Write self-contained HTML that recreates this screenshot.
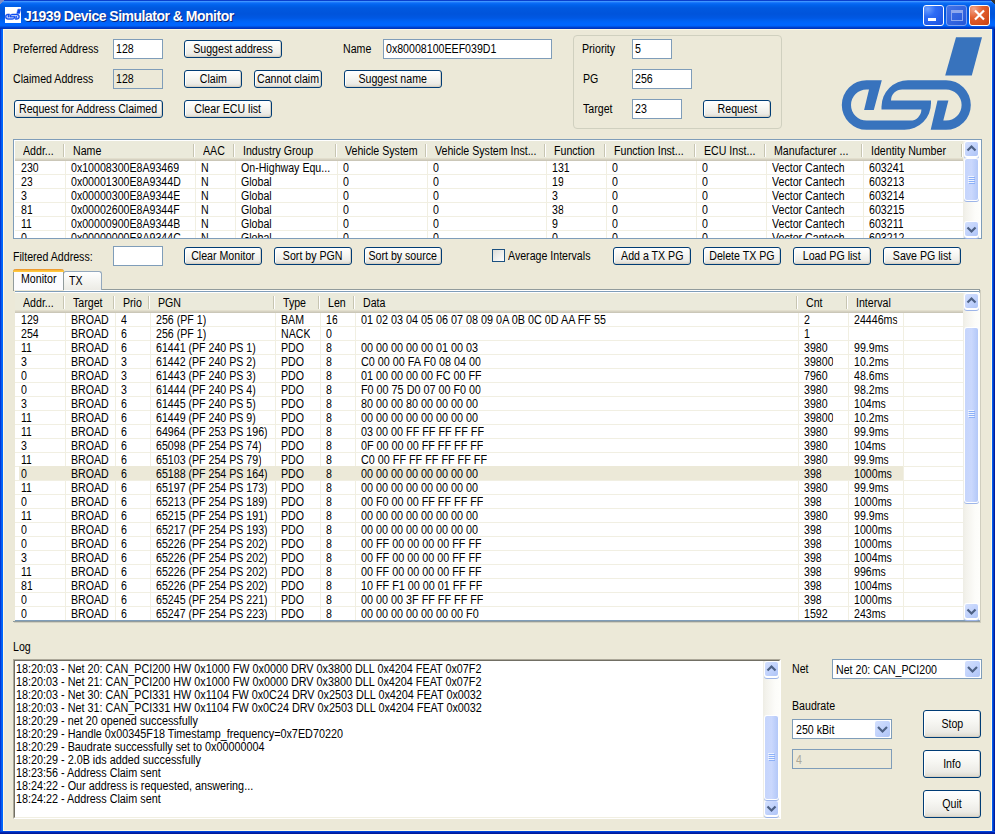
<!DOCTYPE html><html><head><meta charset="utf-8"><title>J1939 Device Simulator &amp; Monitor</title><style>
*{box-sizing:border-box;margin:0;padding:0}
html,body{width:995px;height:834px;overflow:hidden;background:#ECE9D8;font-family:"Liberation Sans",sans-serif;font-size:12px;color:#000;letter-spacing:0}
.lbl,.ht,.c{transform:scaleX(.885);transform-origin:0 0}
.sp{display:inline-block;transform:scaleX(.885)}
.tsp{display:inline-block;transform:scaleX(.885);transform-origin:0 0}
.a{position:absolute;white-space:pre}
.lbl{position:absolute;white-space:pre;line-height:13px}
.btn{position:absolute;display:flex;justify-content:center;border:1px solid #003C74;border-radius:3px;background:linear-gradient(#FFFFFF 0%,#F7F7F3 40%,#ECEBE6 80%,#DCD8CC 100%);text-align:center;white-space:pre;line-height:15px;box-shadow:inset -1px -1px 0 #D6D0C5, inset 1px 1px 0 #FFFFFF}
.tb{position:absolute;border:1px solid #7F9DB9;background:#fff;white-space:pre;padding-left:2px;line-height:17px}
.tbd{position:absolute;border:1px solid #7F9DB9;background:#ECE9D8;white-space:pre;padding-left:2px;line-height:17px}
.hdr{position:absolute;background:linear-gradient(#EBEADB 0,#EBEADB 17px,#E2DECD 17px,#E2DECD 18px,#D6D2C2 18px,#D6D2C2 19px,#CBC7B8 19px)}
.hs{position:absolute;top:3px;width:2px;height:13px;border-left:1px solid #C7C5B2;border-right:1px solid #FFFFFF}
.ht{position:absolute;top:3px;line-height:13px;white-space:pre}
.gv{position:absolute;width:1px;background:#F1EFE2}
.gh{position:absolute;height:1px;background:#F1EFE2}
.c{position:absolute;white-space:pre;line-height:13px;overflow:hidden}
</style></head><body>
<div class="a" style="left:0;top:0;width:995px;height:29px;background:linear-gradient(#0A3FCC 0px,#0A3FCC 1px,#3D95FF 1px,#3D95FF 2px,#2A82FF 2px,#0C6DF7 3px,#0062EC 5px,#0058DF 8px,#0054DB 14px,#0058E3 18px,#0062F4 21px,#0066FF 24px,#0063FA 26px,#0047D5 27px,#0031B8 29px)"></div>
<div class="a" style="left:0;top:0;width:4px;height:4px;background:linear-gradient(135deg,#7D8CC8 50%,transparent 50%)"></div>
<div class="a" style="left:991px;top:0;width:4px;height:4px;background:linear-gradient(225deg,#333 50%,transparent 50%)"></div>
<div class="a" style="left:0;top:29px;width:3px;height:805px;background:linear-gradient(90deg,#0019CF,#0855DD 1px,#0066FF 2px)"></div>
<div class="a" style="left:992px;top:29px;width:3px;height:805px;background:linear-gradient(90deg,#0066FF,#0855DD 1px,#001EA0 2px)"></div>
<div class="a" style="left:0;top:831px;width:995px;height:3px;background:linear-gradient(#0055EA,#0033CC 1px,#001A9A 2px)"></div>
<div class="a" style="left:3px;top:29px;width:989px;height:1px;background:#FFF8E2"></div>
<div class="a" style="left:3px;top:29px;width:1px;height:802px;background:#FFF8E2"></div>
<div class="a" style="left:991px;top:29px;width:1px;height:802px;background:#FFF8E2"></div>
<div class="a" style="left:3px;top:830px;width:989px;height:1px;background:#FFF8E2"></div>
<svg class="a" style="left:5px;top:7px" width="16" height="16" viewBox="0 0 16 16"><rect width="16" height="16" fill="#fff"/>
<g transform="translate(-93.2 -2.0) scale(0.111)"><path fill="#0D4AF0" stroke="#0D4AF0" stroke-width="4" d="M956 37.2 L982 37.2 L971.8 75.5 L945.2 75.5Z"/><path fill="#0D4AF0" stroke="#0D4AF0" stroke-width="4" d="M881.8 80.2 L866.6 80.2 A24.8 24.8 0 0 0 866.6 129.8 L904.5 129.8 A26.5 26.5 0 0 0 931 103.3 L931 100.5 L891 100.5 A11.2 11.2 0 0 1 902.3 89.4 L946 89.4 A15.6 15.6 0 0 1 946 120.6 L943.3 120.6 L948.4 100.5 L937.5 100.5 L930.7 129.8 L946 129.8 A24.8 24.8 0 0 0 946 80.2 L908 80.2 A26.5 26.5 0 0 0 881.5 106.7 L881.5 109.6 L921.4 109.6 A11.2 11.2 0 0 1 910.2 120.6 L866.6 120.6 A15.6 15.6 0 0 1 866.6 89.4 L869 89.4 L864.1 110 L873.8 110 Z"/></g></svg>
<div class="a" style="left:25px;top:9px;font:bold 14px 'Liberation Sans', sans-serif;letter-spacing:-0.5px;color:#0A1E6E;opacity:.9">J1939 Device Simulator &amp; Monitor</div>
<div class="a" style="left:24px;top:8px;font:bold 14px 'Liberation Sans', sans-serif;letter-spacing:-0.5px;color:#FFFFFF">J1939 Device Simulator &amp; Monitor</div>
<div class="a" style="left:923px;top:5px;width:21px;height:21px;border:1px solid #fff;border-radius:3px;background:radial-gradient(circle at 20% 15%,#6EA0FF 0,#2E6CF5 35%,#1A50E0 100%)"><div class="a" style="left:4px;top:12px;width:8px;height:3px;background:#fff"></div></div>
<div class="a" style="left:946px;top:5px;width:21px;height:21px;border:1px solid #7FA2F2;border-radius:3px;background:linear-gradient(135deg,#4474E8,#2456D8)"><div class="a" style="left:4px;top:4px;width:12px;height:11px;border:1px solid #8EA8EE;border-top:3px solid #8EA8EE"></div></div>
<div class="a" style="left:969px;top:5px;width:21px;height:21px;border:1px solid #fff;border-radius:3px;background:radial-gradient(circle at 20% 15%,#F2A48A 0,#E3602F 40%,#C8400F 100%)"><svg class="a" style="left:0;top:0" width="19" height="19"><path d="M5 4.5 L14 13.5 M14 4.5 L5 13.5" stroke="#fff" stroke-width="2.2"/></svg></div>
<div class="lbl" style="left:13px;top:43px;">Preferred Address</div>
<div class="tb" style="left:113px;top:39px;width:50px;height:20px;line-height:18px;"><span class="tsp">128</span></div>
<div class="lbl" style="left:13px;top:73px;">Claimed Address</div>
<div class="tbd" style="left:113px;top:69px;width:50px;height:20px;line-height:18px;"><span class="tsp">128</span></div>
<div class="btn" style="left:14px;top:100px;width:149px;height:18px;line-height:16px;"><span class="sp">Request for Address Claimed</span></div>
<div class="btn" style="left:184px;top:40px;width:98px;height:18px;line-height:16px;"><span class="sp">Suggest address</span></div>
<div class="btn" style="left:184px;top:70px;width:58px;height:18px;line-height:16px;"><span class="sp">Claim</span></div>
<div class="btn" style="left:254px;top:70px;width:68px;height:18px;line-height:16px;"><span class="sp">Cannot claim</span></div>
<div class="btn" style="left:184px;top:100px;width:88px;height:18px;line-height:16px;"><span class="sp">Clear ECU list</span></div>
<div class="lbl" style="left:343px;top:43px;">Name</div>
<div class="tb" style="left:383px;top:39px;width:169px;height:20px;line-height:18px;"><span class="tsp">0x80008100EEF039D1</span></div>
<div class="btn" style="left:344px;top:70px;width:98px;height:18px;line-height:16px;"><span class="sp">Suggest name</span></div>
<div class="a" style="left:573px;top:35px;width:209px;height:94px;border:1px solid #D0D0BF;border-radius:4px"></div>
<div class="lbl" style="left:582px;top:43px;">Priority</div>
<div class="tb" style="left:632px;top:39px;width:40px;height:20px;line-height:18px;"><span class="tsp">5</span></div>
<div class="lbl" style="left:583px;top:73px;">PG</div>
<div class="tb" style="left:632px;top:69px;width:60px;height:20px;line-height:18px;"><span class="tsp">256</span></div>
<div class="lbl" style="left:583px;top:103px;">Target</div>
<div class="tb" style="left:632px;top:99px;width:50px;height:20px;line-height:18px;"><span class="tsp">23</span></div>
<div class="btn" style="left:703px;top:100px;width:68px;height:18px;line-height:16px;"><span class="sp">Request</span></div>
<svg class="a" style="left:0;top:0" width="995" height="140" viewBox="0 0 995 140">
<path fill="#3873BD" d="M956 37.2 L982 37.2 L971.8 75.5 L945.2 75.5Z"/>
<path fill="#3873BD" fill-rule="nonzero" d="M881.8 80.2 L866.6 80.2 A24.8 24.8 0 0 0 866.6 129.8 L904.5 129.8 A26.5 26.5 0 0 0 931 103.3 L931 100.5 L891 100.5 A11.2 11.2 0 0 1 902.3 89.4 L946 89.4 A15.6 15.6 0 0 1 946 120.6 L943.3 120.6 L948.4 100.5 L937.5 100.5 L930.7 129.8 L946 129.8 A24.8 24.8 0 0 0 946 80.2 L908 80.2 A26.5 26.5 0 0 0 881.5 106.7 L881.5 109.6 L921.4 109.6 A11.2 11.2 0 0 1 910.2 120.6 L866.6 120.6 A15.6 15.6 0 0 1 866.6 89.4 L869 89.4 L864.1 110 L873.8 110 Z"/>
</svg>
<div class="a" style="left:13px;top:139px;width:969px;height:100px;border:1px solid #7F9DB9;background:#fff"></div>
<div class="gh" style="left:15px;top:174px;width:948px"></div>
<div class="gh" style="left:15px;top:188px;width:948px"></div>
<div class="gh" style="left:15px;top:202px;width:948px"></div>
<div class="gh" style="left:15px;top:216px;width:948px"></div>
<div class="gh" style="left:15px;top:230px;width:948px"></div>
<div class="gv" style="left:65px;top:161px;height:77px"></div>
<div class="gv" style="left:195px;top:161px;height:77px"></div>
<div class="gv" style="left:235px;top:161px;height:77px"></div>
<div class="gv" style="left:337px;top:161px;height:77px"></div>
<div class="gv" style="left:427px;top:161px;height:77px"></div>
<div class="gv" style="left:546px;top:161px;height:77px"></div>
<div class="gv" style="left:606px;top:161px;height:77px"></div>
<div class="gv" style="left:696px;top:161px;height:77px"></div>
<div class="gv" style="left:766px;top:161px;height:77px"></div>
<div class="gv" style="left:863px;top:161px;height:77px"></div>
<div class="a" style="left:15px;top:161px;width:948px;height:77px;overflow:hidden">
<div class="c" style="left:6px;top:1px">230</div>
<div class="c" style="left:56px;top:1px">0x10008300E8A93469</div>
<div class="c" style="left:186px;top:1px">N</div>
<div class="c" style="left:226px;top:1px">On-Highway Equ...</div>
<div class="c" style="left:328px;top:1px">0</div>
<div class="c" style="left:418px;top:1px">0</div>
<div class="c" style="left:537px;top:1px">131</div>
<div class="c" style="left:597px;top:1px">0</div>
<div class="c" style="left:687px;top:1px">0</div>
<div class="c" style="left:757px;top:1px">Vector Cantech</div>
<div class="c" style="left:854px;top:1px">603241</div>
<div class="c" style="left:6px;top:15px">23</div>
<div class="c" style="left:56px;top:15px">0x00001300E8A9344D</div>
<div class="c" style="left:186px;top:15px">N</div>
<div class="c" style="left:226px;top:15px">Global</div>
<div class="c" style="left:328px;top:15px">0</div>
<div class="c" style="left:418px;top:15px">0</div>
<div class="c" style="left:537px;top:15px">19</div>
<div class="c" style="left:597px;top:15px">0</div>
<div class="c" style="left:687px;top:15px">0</div>
<div class="c" style="left:757px;top:15px">Vector Cantech</div>
<div class="c" style="left:854px;top:15px">603213</div>
<div class="c" style="left:6px;top:29px">3</div>
<div class="c" style="left:56px;top:29px">0x00000300E8A9344E</div>
<div class="c" style="left:186px;top:29px">N</div>
<div class="c" style="left:226px;top:29px">Global</div>
<div class="c" style="left:328px;top:29px">0</div>
<div class="c" style="left:418px;top:29px">0</div>
<div class="c" style="left:537px;top:29px">3</div>
<div class="c" style="left:597px;top:29px">0</div>
<div class="c" style="left:687px;top:29px">0</div>
<div class="c" style="left:757px;top:29px">Vector Cantech</div>
<div class="c" style="left:854px;top:29px">603214</div>
<div class="c" style="left:6px;top:43px">81</div>
<div class="c" style="left:56px;top:43px">0x00002600E8A9344F</div>
<div class="c" style="left:186px;top:43px">N</div>
<div class="c" style="left:226px;top:43px">Global</div>
<div class="c" style="left:328px;top:43px">0</div>
<div class="c" style="left:418px;top:43px">0</div>
<div class="c" style="left:537px;top:43px">38</div>
<div class="c" style="left:597px;top:43px">0</div>
<div class="c" style="left:687px;top:43px">0</div>
<div class="c" style="left:757px;top:43px">Vector Cantech</div>
<div class="c" style="left:854px;top:43px">603215</div>
<div class="c" style="left:6px;top:57px">11</div>
<div class="c" style="left:56px;top:57px">0x00000900E8A9344B</div>
<div class="c" style="left:186px;top:57px">N</div>
<div class="c" style="left:226px;top:57px">Global</div>
<div class="c" style="left:328px;top:57px">0</div>
<div class="c" style="left:418px;top:57px">0</div>
<div class="c" style="left:537px;top:57px">9</div>
<div class="c" style="left:597px;top:57px">0</div>
<div class="c" style="left:687px;top:57px">0</div>
<div class="c" style="left:757px;top:57px">Vector Cantech</div>
<div class="c" style="left:854px;top:57px">603211</div>
<div class="c" style="left:6px;top:71px">0</div>
<div class="c" style="left:56px;top:71px">0x00000000E8A9344C</div>
<div class="c" style="left:186px;top:71px">N</div>
<div class="c" style="left:226px;top:71px">Global</div>
<div class="c" style="left:328px;top:71px">0</div>
<div class="c" style="left:418px;top:71px">0</div>
<div class="c" style="left:537px;top:71px">0</div>
<div class="c" style="left:597px;top:71px">0</div>
<div class="c" style="left:687px;top:71px">0</div>
<div class="c" style="left:757px;top:71px">Vector Cantech</div>
<div class="c" style="left:854px;top:71px">603212</div>
</div>
<div class="hdr" style="left:15px;top:141px;width:948px;height:20px"></div>
<div class="hs" style="left:63px;top:144px"></div>
<div class="hs" style="left:193px;top:144px"></div>
<div class="hs" style="left:233px;top:144px"></div>
<div class="hs" style="left:335px;top:144px"></div>
<div class="hs" style="left:425px;top:144px"></div>
<div class="hs" style="left:544px;top:144px"></div>
<div class="hs" style="left:604px;top:144px"></div>
<div class="hs" style="left:694px;top:144px"></div>
<div class="hs" style="left:764px;top:144px"></div>
<div class="hs" style="left:861px;top:144px"></div>
<div class="hs" style="left:961px;top:144px"></div>
<div class="ht" style="left:23px;top:145px">Addr...</div>
<div class="ht" style="left:73px;top:145px">Name</div>
<div class="ht" style="left:203px;top:145px">AAC</div>
<div class="ht" style="left:243px;top:145px">Industry Group</div>
<div class="ht" style="left:345px;top:145px">Vehicle System</div>
<div class="ht" style="left:435px;top:145px">Vehicle System Inst...</div>
<div class="ht" style="left:554px;top:145px">Function</div>
<div class="ht" style="left:614px;top:145px">Function Inst...</div>
<div class="ht" style="left:704px;top:145px">ECU Inst...</div>
<div class="ht" style="left:774px;top:145px">Manufacturer ...</div>
<div class="ht" style="left:871px;top:145px">Identity Number</div>
<div class="a" style="left:963px;top:141px;width:17px;height:97px;background:linear-gradient(90deg,#EEEDE5 0,#F3F2EC 3px,#FCFCF9 12px,#FEFEFB 17px)"></div>
<div class="a" style="left:964px;top:141px;width:15px;height:17px;border-radius:3px;background:#fff;box-shadow:0 1px 0 #9DB5E8"></div>
<div class="a" style="left:965px;top:142px;width:13px;height:14px;border-radius:2px;background:linear-gradient(135deg,#D4E0FD 0%,#C2D3FC 50%,#AEC4F6 100%)"><svg class="a" style="left:-1px;top:0" width="15" height="14"><path d="M3.5 8.5 L7.5 4.5 L11.5 8.5" fill="none" stroke="#4D6185" stroke-width="2.2"/></svg></div>
<div class="a" style="left:964px;top:221px;width:15px;height:17px;border-radius:3px;background:#fff;box-shadow:0 1px 0 #9DB5E8"></div>
<div class="a" style="left:965px;top:222px;width:13px;height:14px;border-radius:2px;background:linear-gradient(135deg,#D4E0FD 0%,#C2D3FC 50%,#AEC4F6 100%)"><svg class="a" style="left:-1px;top:0" width="15" height="14"><path d="M3.5 5.5 L7.5 9.5 L11.5 5.5" fill="none" stroke="#4D6185" stroke-width="2.2"/></svg></div>
<div class="a" style="left:964px;top:158px;width:15px;height:43px;border-radius:3px;background:#fff;box-shadow:0 1px 0 #9DB5E8"></div>
<div class="a" style="left:965px;top:159px;width:13px;height:41px;border-radius:2px;background:linear-gradient(90deg,#C6D5FC 0%,#CAD8FD 50%,#B3C8F8 100%)"></div>
<div class="a" style="left:968px;top:176px;width:6px;height:1px;background:#EEF3FE"></div>
<div class="a" style="left:969px;top:177px;width:6px;height:1px;background:#8CB0F8"></div>
<div class="a" style="left:968px;top:178px;width:6px;height:1px;background:#EEF3FE"></div>
<div class="a" style="left:969px;top:179px;width:6px;height:1px;background:#8CB0F8"></div>
<div class="a" style="left:968px;top:180px;width:6px;height:1px;background:#EEF3FE"></div>
<div class="a" style="left:969px;top:181px;width:6px;height:1px;background:#8CB0F8"></div>
<div class="a" style="left:968px;top:182px;width:6px;height:1px;background:#EEF3FE"></div>
<div class="a" style="left:969px;top:183px;width:6px;height:1px;background:#8CB0F8"></div>
<div class="lbl" style="left:13px;top:251px;">Filtered Address:</div>
<div class="tb" style="left:113px;top:246px;width:50px;height:20px;line-height:18px;"><span class="tsp"></span></div>
<div class="btn" style="left:184px;top:247px;width:78px;height:18px;line-height:16px;"><span class="sp">Clear Monitor</span></div>
<div class="btn" style="left:274px;top:247px;width:78px;height:18px;line-height:16px;"><span class="sp">Sort by PGN</span></div>
<div class="btn" style="left:364px;top:247px;width:78px;height:18px;line-height:16px;"><span class="sp">Sort by source</span></div>
<div class="a" style="left:492px;top:249px;width:13px;height:13px;border:1px solid #1C5180;background:linear-gradient(135deg,#DCDCD7,#FFFFFF)"></div>
<div class="lbl" style="left:508px;top:250px;">Average Intervals</div>
<div class="btn" style="left:613px;top:247px;width:78px;height:18px;line-height:16px;"><span class="sp">Add a TX PG</span></div>
<div class="btn" style="left:703px;top:247px;width:78px;height:18px;line-height:16px;"><span class="sp">Delete TX PG</span></div>
<div class="btn" style="left:793px;top:247px;width:78px;height:18px;line-height:16px;"><span class="sp">Load PG list</span></div>
<div class="btn" style="left:883px;top:247px;width:78px;height:18px;line-height:16px;"><span class="sp">Save PG list</span></div>
<div class="a" style="left:13px;top:289px;width:967px;height:333px;border:1px solid #919B9C;border-left:none;box-shadow:1px 1px 0 #D0CEBF"></div>
<div class="a" style="left:63px;top:271px;width:39px;height:19px;border:1px solid #93A8BD;border-bottom:none;border-radius:3px 3px 0 0;background:linear-gradient(#FFFFFF,#F3F3EF 60%,#ECEBE5)"></div>
<div class="lbl" style="left:69px;top:275px;">TX</div>
<div class="a" style="left:13px;top:269px;width:51px;height:22px;border:1px solid #919B9C;border-bottom:none;border-radius:3px 3px 0 0;background:#FCFCFE;border-top:none"></div>
<div class="a" style="left:13px;top:269px;width:51px;height:3px;border-radius:3px 3px 0 0;background:linear-gradient(#E68B2C,#FFC73C 2px,#FFC73C)"></div>
<div class="lbl" style="left:21px;top:273px;">Monitor</div>
<div class="a" style="left:14px;top:290px;width:965px;height:330px;background:#ECE9D8"></div>
<div class="a" style="left:64px;top:290px;width:915px;height:1px;background:#FFFFFF"></div>
<div class="a" style="left:15px;top:291px;width:965px;height:330px;border-top:1px solid #7F9DB9;border-right:1px solid #A5B9DA;border-bottom:1px solid #7F9DB9;background:#fff"></div>
<div class="gh" style="left:15px;top:326px;width:948px"></div>
<div class="gh" style="left:15px;top:340px;width:948px"></div>
<div class="gh" style="left:15px;top:354px;width:948px"></div>
<div class="gh" style="left:15px;top:368px;width:948px"></div>
<div class="gh" style="left:15px;top:382px;width:948px"></div>
<div class="gh" style="left:15px;top:396px;width:948px"></div>
<div class="gh" style="left:15px;top:410px;width:948px"></div>
<div class="gh" style="left:15px;top:424px;width:948px"></div>
<div class="gh" style="left:15px;top:438px;width:948px"></div>
<div class="gh" style="left:15px;top:452px;width:948px"></div>
<div class="gh" style="left:15px;top:466px;width:4px"></div>
<div class="gh" style="left:903px;top:466px;width:60px"></div>
<div class="gh" style="left:15px;top:480px;width:948px"></div>
<div class="gh" style="left:15px;top:494px;width:948px"></div>
<div class="gh" style="left:15px;top:508px;width:948px"></div>
<div class="gh" style="left:15px;top:522px;width:948px"></div>
<div class="gh" style="left:15px;top:536px;width:948px"></div>
<div class="gh" style="left:15px;top:550px;width:948px"></div>
<div class="gh" style="left:15px;top:564px;width:948px"></div>
<div class="gh" style="left:15px;top:578px;width:948px"></div>
<div class="gh" style="left:15px;top:592px;width:948px"></div>
<div class="gh" style="left:15px;top:606px;width:948px"></div>
<div class="gv" style="left:65px;top:313px;height:307px"></div>
<div class="gv" style="left:115px;top:313px;height:307px"></div>
<div class="gv" style="left:150px;top:313px;height:307px"></div>
<div class="gv" style="left:275px;top:313px;height:307px"></div>
<div class="gv" style="left:320px;top:313px;height:307px"></div>
<div class="gv" style="left:355px;top:313px;height:307px"></div>
<div class="gv" style="left:798px;top:313px;height:307px"></div>
<div class="gv" style="left:848px;top:313px;height:307px"></div>
<div class="gv" style="left:903px;top:313px;height:307px"></div>
<div class="a" style="left:19px;top:466px;width:884px;height:14px;background:#ECE9D8"></div>
<div class="a" style="left:15px;top:313px;width:948px;height:307px;overflow:hidden">
<div class="c" style="left:6px;top:1px">129</div>
<div class="c" style="left:56px;top:1px">BROAD</div>
<div class="c" style="left:106px;top:1px">4</div>
<div class="c" style="left:141px;top:1px">256 (PF 1)</div>
<div class="c" style="left:266px;top:1px">BAM</div>
<div class="c" style="left:311px;top:1px">16</div>
<div class="c" style="left:346px;top:1px;transform:scaleX(.9)">01 02 03 04 05 06 07 08 09 0A 0B 0C 0D AA FF 55</div>
<div class="c" style="left:789px;top:1px">2</div>
<div class="c" style="left:839px;top:1px">24446ms</div>
<div class="c" style="left:6px;top:15px">254</div>
<div class="c" style="left:56px;top:15px">BROAD</div>
<div class="c" style="left:106px;top:15px">6</div>
<div class="c" style="left:141px;top:15px">256 (PF 1)</div>
<div class="c" style="left:266px;top:15px">NACK</div>
<div class="c" style="left:311px;top:15px">0</div>
<div class="c" style="left:789px;top:15px">1</div>
<div class="c" style="left:6px;top:29px">11</div>
<div class="c" style="left:56px;top:29px">BROAD</div>
<div class="c" style="left:106px;top:29px">6</div>
<div class="c" style="left:141px;top:29px">61441 (PF 240 PS 1)</div>
<div class="c" style="left:266px;top:29px">PDO</div>
<div class="c" style="left:311px;top:29px">8</div>
<div class="c" style="left:346px;top:29px;transform:scaleX(.9)">00 00 00 00 00 01 00 03</div>
<div class="c" style="left:789px;top:29px">3980</div>
<div class="c" style="left:839px;top:29px">99.9ms</div>
<div class="c" style="left:6px;top:43px">3</div>
<div class="c" style="left:56px;top:43px">BROAD</div>
<div class="c" style="left:106px;top:43px">3</div>
<div class="c" style="left:141px;top:43px">61442 (PF 240 PS 2)</div>
<div class="c" style="left:266px;top:43px">PDO</div>
<div class="c" style="left:311px;top:43px">8</div>
<div class="c" style="left:346px;top:43px;transform:scaleX(.9)">C0 00 00 FA F0 08 04 00</div>
<div class="c" style="left:789px;top:43px">39800</div>
<div class="c" style="left:839px;top:43px">10.2ms</div>
<div class="c" style="left:6px;top:57px">0</div>
<div class="c" style="left:56px;top:57px">BROAD</div>
<div class="c" style="left:106px;top:57px">3</div>
<div class="c" style="left:141px;top:57px">61443 (PF 240 PS 3)</div>
<div class="c" style="left:266px;top:57px">PDO</div>
<div class="c" style="left:311px;top:57px">8</div>
<div class="c" style="left:346px;top:57px;transform:scaleX(.9)">01 00 00 00 00 FC 00 FF</div>
<div class="c" style="left:789px;top:57px">7960</div>
<div class="c" style="left:839px;top:57px">48.6ms</div>
<div class="c" style="left:6px;top:71px">0</div>
<div class="c" style="left:56px;top:71px">BROAD</div>
<div class="c" style="left:106px;top:71px">3</div>
<div class="c" style="left:141px;top:71px">61444 (PF 240 PS 4)</div>
<div class="c" style="left:266px;top:71px">PDO</div>
<div class="c" style="left:311px;top:71px">8</div>
<div class="c" style="left:346px;top:71px;transform:scaleX(.9)">F0 00 75 D0 07 00 F0 00</div>
<div class="c" style="left:789px;top:71px">3980</div>
<div class="c" style="left:839px;top:71px">98.2ms</div>
<div class="c" style="left:6px;top:85px">3</div>
<div class="c" style="left:56px;top:85px">BROAD</div>
<div class="c" style="left:106px;top:85px">6</div>
<div class="c" style="left:141px;top:85px">61445 (PF 240 PS 5)</div>
<div class="c" style="left:266px;top:85px">PDO</div>
<div class="c" style="left:311px;top:85px">8</div>
<div class="c" style="left:346px;top:85px;transform:scaleX(.9)">80 00 00 80 00 00 00 00</div>
<div class="c" style="left:789px;top:85px">3980</div>
<div class="c" style="left:839px;top:85px">104ms</div>
<div class="c" style="left:6px;top:99px">11</div>
<div class="c" style="left:56px;top:99px">BROAD</div>
<div class="c" style="left:106px;top:99px">6</div>
<div class="c" style="left:141px;top:99px">61449 (PF 240 PS 9)</div>
<div class="c" style="left:266px;top:99px">PDO</div>
<div class="c" style="left:311px;top:99px">8</div>
<div class="c" style="left:346px;top:99px;transform:scaleX(.9)">00 00 00 00 00 00 00 00</div>
<div class="c" style="left:789px;top:99px">39800</div>
<div class="c" style="left:839px;top:99px">10.2ms</div>
<div class="c" style="left:6px;top:113px">11</div>
<div class="c" style="left:56px;top:113px">BROAD</div>
<div class="c" style="left:106px;top:113px">6</div>
<div class="c" style="left:141px;top:113px">64964 (PF 253 PS 196)</div>
<div class="c" style="left:266px;top:113px">PDO</div>
<div class="c" style="left:311px;top:113px">8</div>
<div class="c" style="left:346px;top:113px;transform:scaleX(.9)">03 00 00 FF FF FF FF FF</div>
<div class="c" style="left:789px;top:113px">3980</div>
<div class="c" style="left:839px;top:113px">99.9ms</div>
<div class="c" style="left:6px;top:127px">3</div>
<div class="c" style="left:56px;top:127px">BROAD</div>
<div class="c" style="left:106px;top:127px">6</div>
<div class="c" style="left:141px;top:127px">65098 (PF 254 PS 74)</div>
<div class="c" style="left:266px;top:127px">PDO</div>
<div class="c" style="left:311px;top:127px">8</div>
<div class="c" style="left:346px;top:127px;transform:scaleX(.9)">0F 00 00 00 FF FF FF FF</div>
<div class="c" style="left:789px;top:127px">3980</div>
<div class="c" style="left:839px;top:127px">104ms</div>
<div class="c" style="left:6px;top:141px">11</div>
<div class="c" style="left:56px;top:141px">BROAD</div>
<div class="c" style="left:106px;top:141px">6</div>
<div class="c" style="left:141px;top:141px">65103 (PF 254 PS 79)</div>
<div class="c" style="left:266px;top:141px">PDO</div>
<div class="c" style="left:311px;top:141px">8</div>
<div class="c" style="left:346px;top:141px;transform:scaleX(.9)">C0 00 FF FF FF FF FF FF</div>
<div class="c" style="left:789px;top:141px">3980</div>
<div class="c" style="left:839px;top:141px">99.9ms</div>
<div class="c" style="left:6px;top:155px">0</div>
<div class="c" style="left:56px;top:155px">BROAD</div>
<div class="c" style="left:106px;top:155px">6</div>
<div class="c" style="left:141px;top:155px">65188 (PF 254 PS 164)</div>
<div class="c" style="left:266px;top:155px">PDO</div>
<div class="c" style="left:311px;top:155px">8</div>
<div class="c" style="left:346px;top:155px;transform:scaleX(.9)">00 00 00 00 00 00 00 00</div>
<div class="c" style="left:789px;top:155px">398</div>
<div class="c" style="left:839px;top:155px">1000ms</div>
<div class="c" style="left:6px;top:169px">11</div>
<div class="c" style="left:56px;top:169px">BROAD</div>
<div class="c" style="left:106px;top:169px">6</div>
<div class="c" style="left:141px;top:169px">65197 (PF 254 PS 173)</div>
<div class="c" style="left:266px;top:169px">PDO</div>
<div class="c" style="left:311px;top:169px">8</div>
<div class="c" style="left:346px;top:169px;transform:scaleX(.9)">00 00 00 00 00 00 00 00</div>
<div class="c" style="left:789px;top:169px">3980</div>
<div class="c" style="left:839px;top:169px">99.9ms</div>
<div class="c" style="left:6px;top:183px">0</div>
<div class="c" style="left:56px;top:183px">BROAD</div>
<div class="c" style="left:106px;top:183px">6</div>
<div class="c" style="left:141px;top:183px">65213 (PF 254 PS 189)</div>
<div class="c" style="left:266px;top:183px">PDO</div>
<div class="c" style="left:311px;top:183px">8</div>
<div class="c" style="left:346px;top:183px;transform:scaleX(.9)">00 F0 00 00 FF FF FF FF</div>
<div class="c" style="left:789px;top:183px">398</div>
<div class="c" style="left:839px;top:183px">1000ms</div>
<div class="c" style="left:6px;top:197px">11</div>
<div class="c" style="left:56px;top:197px">BROAD</div>
<div class="c" style="left:106px;top:197px">6</div>
<div class="c" style="left:141px;top:197px">65215 (PF 254 PS 191)</div>
<div class="c" style="left:266px;top:197px">PDO</div>
<div class="c" style="left:311px;top:197px">8</div>
<div class="c" style="left:346px;top:197px;transform:scaleX(.9)">00 00 00 00 00 00 00 00</div>
<div class="c" style="left:789px;top:197px">3980</div>
<div class="c" style="left:839px;top:197px">99.9ms</div>
<div class="c" style="left:6px;top:211px">0</div>
<div class="c" style="left:56px;top:211px">BROAD</div>
<div class="c" style="left:106px;top:211px">6</div>
<div class="c" style="left:141px;top:211px">65217 (PF 254 PS 193)</div>
<div class="c" style="left:266px;top:211px">PDO</div>
<div class="c" style="left:311px;top:211px">8</div>
<div class="c" style="left:346px;top:211px;transform:scaleX(.9)">00 00 00 00 00 00 00 00</div>
<div class="c" style="left:789px;top:211px">398</div>
<div class="c" style="left:839px;top:211px">1000ms</div>
<div class="c" style="left:6px;top:225px">0</div>
<div class="c" style="left:56px;top:225px">BROAD</div>
<div class="c" style="left:106px;top:225px">6</div>
<div class="c" style="left:141px;top:225px">65226 (PF 254 PS 202)</div>
<div class="c" style="left:266px;top:225px">PDO</div>
<div class="c" style="left:311px;top:225px">8</div>
<div class="c" style="left:346px;top:225px;transform:scaleX(.9)">00 FF 00 00 00 00 FF FF</div>
<div class="c" style="left:789px;top:225px">398</div>
<div class="c" style="left:839px;top:225px">1000ms</div>
<div class="c" style="left:6px;top:239px">3</div>
<div class="c" style="left:56px;top:239px">BROAD</div>
<div class="c" style="left:106px;top:239px">6</div>
<div class="c" style="left:141px;top:239px">65226 (PF 254 PS 202)</div>
<div class="c" style="left:266px;top:239px">PDO</div>
<div class="c" style="left:311px;top:239px">8</div>
<div class="c" style="left:346px;top:239px;transform:scaleX(.9)">00 FF 00 00 00 00 FF FF</div>
<div class="c" style="left:789px;top:239px">398</div>
<div class="c" style="left:839px;top:239px">1004ms</div>
<div class="c" style="left:6px;top:253px">11</div>
<div class="c" style="left:56px;top:253px">BROAD</div>
<div class="c" style="left:106px;top:253px">6</div>
<div class="c" style="left:141px;top:253px">65226 (PF 254 PS 202)</div>
<div class="c" style="left:266px;top:253px">PDO</div>
<div class="c" style="left:311px;top:253px">8</div>
<div class="c" style="left:346px;top:253px;transform:scaleX(.9)">00 FF 00 00 00 00 FF FF</div>
<div class="c" style="left:789px;top:253px">398</div>
<div class="c" style="left:839px;top:253px">996ms</div>
<div class="c" style="left:6px;top:267px">81</div>
<div class="c" style="left:56px;top:267px">BROAD</div>
<div class="c" style="left:106px;top:267px">6</div>
<div class="c" style="left:141px;top:267px">65226 (PF 254 PS 202)</div>
<div class="c" style="left:266px;top:267px">PDO</div>
<div class="c" style="left:311px;top:267px">8</div>
<div class="c" style="left:346px;top:267px;transform:scaleX(.9)">10 FF F1 00 00 01 FF FF</div>
<div class="c" style="left:789px;top:267px">398</div>
<div class="c" style="left:839px;top:267px">1004ms</div>
<div class="c" style="left:6px;top:281px">0</div>
<div class="c" style="left:56px;top:281px">BROAD</div>
<div class="c" style="left:106px;top:281px">6</div>
<div class="c" style="left:141px;top:281px">65245 (PF 254 PS 221)</div>
<div class="c" style="left:266px;top:281px">PDO</div>
<div class="c" style="left:311px;top:281px">8</div>
<div class="c" style="left:346px;top:281px;transform:scaleX(.9)">00 00 00 3F FF FF FF FF</div>
<div class="c" style="left:789px;top:281px">398</div>
<div class="c" style="left:839px;top:281px">1000ms</div>
<div class="c" style="left:6px;top:295px">0</div>
<div class="c" style="left:56px;top:295px">BROAD</div>
<div class="c" style="left:106px;top:295px">6</div>
<div class="c" style="left:141px;top:295px">65247 (PF 254 PS 223)</div>
<div class="c" style="left:266px;top:295px">PDO</div>
<div class="c" style="left:311px;top:295px">8</div>
<div class="c" style="left:346px;top:295px;transform:scaleX(.9)">00 00 00 00 00 00 00 F0</div>
<div class="c" style="left:789px;top:295px">1592</div>
<div class="c" style="left:839px;top:295px">243ms</div>
</div>
<div class="hdr" style="left:15px;top:293px;width:948px;height:20px"></div>
<div class="hs" style="left:63px;top:296px"></div>
<div class="hs" style="left:113px;top:296px"></div>
<div class="hs" style="left:148px;top:296px"></div>
<div class="hs" style="left:273px;top:296px"></div>
<div class="hs" style="left:318px;top:296px"></div>
<div class="hs" style="left:353px;top:296px"></div>
<div class="hs" style="left:796px;top:296px"></div>
<div class="hs" style="left:846px;top:296px"></div>
<div class="ht" style="left:23px;top:297px">Addr...</div>
<div class="ht" style="left:73px;top:297px">Target</div>
<div class="ht" style="left:123px;top:297px">Prio</div>
<div class="ht" style="left:158px;top:297px">PGN</div>
<div class="ht" style="left:283px;top:297px">Type</div>
<div class="ht" style="left:328px;top:297px">Len</div>
<div class="ht" style="left:363px;top:297px">Data</div>
<div class="ht" style="left:806px;top:297px">Cnt</div>
<div class="ht" style="left:856px;top:297px">Interval</div>
<div class="ht" style="left:911px;top:297px"></div>
<div class="a" style="left:963px;top:293px;width:17px;height:327px;background:linear-gradient(90deg,#EEEDE5 0,#F3F2EC 3px,#FCFCF9 12px,#FEFEFB 17px)"></div>
<div class="a" style="left:964px;top:293px;width:15px;height:17px;border-radius:3px;background:#fff;box-shadow:0 1px 0 #9DB5E8"></div>
<div class="a" style="left:965px;top:294px;width:13px;height:14px;border-radius:2px;background:linear-gradient(135deg,#D4E0FD 0%,#C2D3FC 50%,#AEC4F6 100%)"><svg class="a" style="left:-1px;top:0" width="15" height="14"><path d="M3.5 8.5 L7.5 4.5 L11.5 8.5" fill="none" stroke="#4D6185" stroke-width="2.2"/></svg></div>
<div class="a" style="left:964px;top:603px;width:15px;height:17px;border-radius:3px;background:#fff;box-shadow:0 1px 0 #9DB5E8"></div>
<div class="a" style="left:965px;top:604px;width:13px;height:14px;border-radius:2px;background:linear-gradient(135deg,#D4E0FD 0%,#C2D3FC 50%,#AEC4F6 100%)"><svg class="a" style="left:-1px;top:0" width="15" height="14"><path d="M3.5 5.5 L7.5 9.5 L11.5 5.5" fill="none" stroke="#4D6185" stroke-width="2.2"/></svg></div>
<div class="a" style="left:964px;top:327px;width:15px;height:176px;border-radius:3px;background:#fff;box-shadow:0 1px 0 #9DB5E8"></div>
<div class="a" style="left:965px;top:328px;width:13px;height:174px;border-radius:2px;background:linear-gradient(90deg,#C6D5FC 0%,#CAD8FD 50%,#B3C8F8 100%)"></div>
<div class="a" style="left:968px;top:410px;width:6px;height:1px;background:#EEF3FE"></div>
<div class="a" style="left:969px;top:411px;width:6px;height:1px;background:#8CB0F8"></div>
<div class="a" style="left:968px;top:412px;width:6px;height:1px;background:#EEF3FE"></div>
<div class="a" style="left:969px;top:413px;width:6px;height:1px;background:#8CB0F8"></div>
<div class="a" style="left:968px;top:414px;width:6px;height:1px;background:#EEF3FE"></div>
<div class="a" style="left:969px;top:415px;width:6px;height:1px;background:#8CB0F8"></div>
<div class="a" style="left:968px;top:416px;width:6px;height:1px;background:#EEF3FE"></div>
<div class="a" style="left:969px;top:417px;width:6px;height:1px;background:#8CB0F8"></div>
<div class="lbl" style="left:13px;top:641px;">Log</div>
<div class="a" style="left:13px;top:659px;width:768px;height:160px;border-top:1px solid #ACA899;border-left:1px solid #ACA899;border-right:1px solid #FFFFFF;border-bottom:1px solid #FFFFFF;background:#fff"></div>
<div class="a" style="left:14px;top:660px;width:766px;height:158px;border-top:1px solid #716F64;border-left:1px solid #716F64;border-right:1px solid #F1EFE2;border-bottom:1px solid #F1EFE2;background:#fff"></div>
<div class="lbl" style="left:16px;top:663px;transform:scaleX(.9)">18:20:03 - Net 20: CAN_PCI200 HW 0x1000 FW 0x0000 DRV 0x3800 DLL 0x4204 FEAT 0x07F2</div>
<div class="lbl" style="left:16px;top:676px;transform:scaleX(.9)">18:20:03 - Net 21: CAN_PCI200 HW 0x1000 FW 0x0000 DRV 0x3800 DLL 0x4204 FEAT 0x07F2</div>
<div class="lbl" style="left:16px;top:689px;transform:scaleX(.9)">18:20:03 - Net 30: CAN_PCI331 HW 0x1104 FW 0x0C24 DRV 0x2503 DLL 0x4204 FEAT 0x0032</div>
<div class="lbl" style="left:16px;top:702px;transform:scaleX(.9)">18:20:03 - Net 31: CAN_PCI331 HW 0x1104 FW 0x0C24 DRV 0x2503 DLL 0x4204 FEAT 0x0032</div>
<div class="lbl" style="left:16px;top:715px;transform:scaleX(.9)">18:20:29 - net 20 opened successfully</div>
<div class="lbl" style="left:16px;top:728px;transform:scaleX(.9)">18:20:29 - Handle 0x00345F18 Timestamp_frequency=0x7ED70220</div>
<div class="lbl" style="left:16px;top:741px;transform:scaleX(.9)">18:20:29 - Baudrate successfully set to 0x00000004</div>
<div class="lbl" style="left:16px;top:754px;transform:scaleX(.9)">18:20:29 - 2.0B ids added successfully</div>
<div class="lbl" style="left:16px;top:767px;transform:scaleX(.9)">18:23:56 - Address Claim sent</div>
<div class="lbl" style="left:16px;top:780px;transform:scaleX(.9)">18:24:22 - Our address is requested, answering...</div>
<div class="lbl" style="left:16px;top:793px;transform:scaleX(.9)">18:24:22 - Address Claim sent</div>
<div class="a" style="left:763px;top:661px;width:17px;height:156px;background:linear-gradient(90deg,#EEEDE5 0,#F3F2EC 3px,#FCFCF9 12px,#FEFEFB 17px)"></div>
<div class="a" style="left:764px;top:661px;width:15px;height:17px;border-radius:3px;background:#fff;box-shadow:0 1px 0 #9DB5E8"></div>
<div class="a" style="left:765px;top:662px;width:13px;height:14px;border-radius:2px;background:linear-gradient(135deg,#D4E0FD 0%,#C2D3FC 50%,#AEC4F6 100%)"><svg class="a" style="left:-1px;top:0" width="15" height="14"><path d="M3.5 8.5 L7.5 4.5 L11.5 8.5" fill="none" stroke="#4D6185" stroke-width="2.2"/></svg></div>
<div class="a" style="left:764px;top:800px;width:15px;height:17px;border-radius:3px;background:#fff;box-shadow:0 1px 0 #9DB5E8"></div>
<div class="a" style="left:765px;top:801px;width:13px;height:14px;border-radius:2px;background:linear-gradient(135deg,#D4E0FD 0%,#C2D3FC 50%,#AEC4F6 100%)"><svg class="a" style="left:-1px;top:0" width="15" height="14"><path d="M3.5 5.5 L7.5 9.5 L11.5 5.5" fill="none" stroke="#4D6185" stroke-width="2.2"/></svg></div>
<div class="a" style="left:764px;top:715px;width:15px;height:85px;border-radius:3px;background:#fff;box-shadow:0 1px 0 #9DB5E8"></div>
<div class="a" style="left:765px;top:716px;width:13px;height:83px;border-radius:2px;background:linear-gradient(90deg,#C6D5FC 0%,#CAD8FD 50%,#B3C8F8 100%)"></div>
<div class="a" style="left:768px;top:753px;width:6px;height:1px;background:#EEF3FE"></div>
<div class="a" style="left:769px;top:754px;width:6px;height:1px;background:#8CB0F8"></div>
<div class="a" style="left:768px;top:755px;width:6px;height:1px;background:#EEF3FE"></div>
<div class="a" style="left:769px;top:756px;width:6px;height:1px;background:#8CB0F8"></div>
<div class="a" style="left:768px;top:757px;width:6px;height:1px;background:#EEF3FE"></div>
<div class="a" style="left:769px;top:758px;width:6px;height:1px;background:#8CB0F8"></div>
<div class="a" style="left:768px;top:759px;width:6px;height:1px;background:#EEF3FE"></div>
<div class="a" style="left:769px;top:760px;width:6px;height:1px;background:#8CB0F8"></div>
<div class="lbl" style="left:792px;top:663px;">Net</div>
<div class="a" style="left:832px;top:659px;width:150px;height:20px;border:1px solid #7F9DB9;background:#fff"></div>
<div class="lbl" style="left:836px;top:664px;">Net 20: CAN_PCI200</div>
<div class="a" style="left:964px;top:661px;width:17px;height:17px"></div>
<div class="lbl" style="left:792px;top:700px;">Baudrate</div>
<div class="a" style="left:792px;top:719px;width:100px;height:20px;border:1px solid #7F9DB9;background:#fff"></div>
<div class="lbl" style="left:796px;top:724px;">250 kBit</div>
<div class="a" style="left:792px;top:749px;width:100px;height:20px;border:1px solid #7F9DB9;background:#ECE9D8"></div>
<div class="lbl" style="left:796px;top:754px;color:#ACA899">4</div>
<div class="btn" style="left:923px;top:710px;width:58px;height:28px;line-height:26px;"><span class="sp">Stop</span></div>
<div class="btn" style="left:923px;top:750px;width:58px;height:28px;line-height:26px;"><span class="sp">Info</span></div>
<div class="btn" style="left:923px;top:790px;width:58px;height:28px;line-height:26px;"><span class="sp">Quit</span></div>
<div class="a" style="left:965px;top:661px;width:15px;height:16px;border-radius:2px;background:linear-gradient(135deg,#D4E0FD 0%,#C2D3FC 50%,#AEC4F6 100%)"><svg class="a" style="left:0;top:0" width="15" height="16"><path d="M3 6 L7.5 10.5 L12 6" fill="none" stroke="#4D6185" stroke-width="2.2"/></svg></div>
<div class="a" style="left:875px;top:721px;width:15px;height:16px;border-radius:2px;background:linear-gradient(135deg,#D4E0FD 0%,#C2D3FC 50%,#AEC4F6 100%)"><svg class="a" style="left:0;top:0" width="15" height="16"><path d="M3 6 L7.5 10.5 L12 6" fill="none" stroke="#4D6185" stroke-width="2.2"/></svg></div>
</body></html>
